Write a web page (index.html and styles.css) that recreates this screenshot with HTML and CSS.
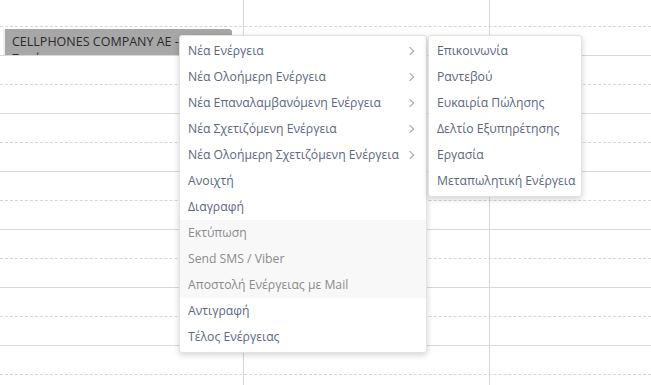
FILE: index.html
```html
<!DOCTYPE html>
<html>
<head>
  <meta charset="UTF-8">
  <title>Ημερολόγιο</title>
  <link rel="stylesheet" href="styles.css">
</head>
<body>
  <div class="calendar">
    <div class="slots">
      <div class="slot first"></div>
      <div class="slot hour"></div>
      <div class="slot"></div>
      <div class="slot hour"></div>
      <div class="slot"></div>
      <div class="slot hour"></div>
      <div class="slot"></div>
      <div class="slot hour"></div>
      <div class="slot"></div>
      <div class="slot hour"></div>
      <div class="slot"></div>
      <div class="slot hour"></div>
      <div class="slot"></div>
      <div class="slot hour"></div>
    </div>
    <div class="columns">
      <div class="col"></div>
      <div class="col"></div>
      <div class="col"></div>
    </div>

    <div class="event">CELLPHONES COMPANY AE - Συνάντηση</div>

    <ul class="menu main-menu">
      <li class="has-sub">Νέα Ενέργεια</li>
      <li class="has-sub">Νέα Ολοήμερη Ενέργεια</li>
      <li class="has-sub">Νέα Επαναλαμβανόμενη Ενέργεια</li>
      <li class="has-sub">Νέα Σχετιζόμενη Ενέργεια</li>
      <li class="has-sub">Νέα Ολοήμερη Σχετιζόμενη Ενέργεια</li>
      <li>Ανοιχτή</li>
      <li>Διαγραφή</li>
      <li class="disabled">Εκτύπωση</li>
      <li class="disabled">Send SMS / Viber</li>
      <li class="disabled">Αποστολή Ενέργειας με Mail</li>
      <li>Αντιγραφή</li>
      <li>Τέλος Ενέργειας</li>
    </ul>

    <ul class="menu sub-menu">
      <li>Επικοινωνία</li>
      <li>Ραντεβού</li>
      <li>Ευκαιρία Πώλησης</li>
      <li>Δελτίο Εξυπηρέτησης</li>
      <li>Εργασία</li>
      <li>Μεταπωλητική Ενέργεια</li>
    </ul>
  </div>
</body>
</html>
```

FILE: styles.css
```css
html, body {
  margin: 0;
  padding: 0;
  background: #ffffff;
  font-family: "Open Sans", "Noto Sans", sans-serif;
  font-size: 12px;
  overflow: hidden;
}

.calendar {
  position: relative;
  width: 651px;
  height: 385px;
  overflow: hidden;
}

/* time slots */
.slots {
  display: flex;
  flex-direction: column;
}
.slot {
  height: 28px;
  flex: none;
  border-bottom: 1px dashed #d6d6d6;
}
.slot.first {
  height: 26px;
}
.slot.hour {
  border-bottom: 1px solid #d8d8d8;
}

/* day columns */
.columns {
  position: absolute;
  top: 0;
  left: 0;
  right: 0;
  bottom: 0;
  display: flex;
}
.col {
  width: 246px;
  flex: none;
  border-right: 1px solid #d8d8d8;
  box-sizing: border-box;
}
.col:first-child {
  width: 244px;
}

/* event */
.event {
  position: absolute;
  left: 3px;
  top: 29px;
  width: 229px;
  height: 26px;
  box-sizing: border-box;
  padding: 4px 0 0 7px;
  background: #a7a7a7;
  border-left: 2px solid #f1f1f1;
  border-top-right-radius: 3px;
  color: #2b2b2b;
  font-size: 12.5px;
  line-height: 17px;
  overflow: hidden;
}

/* context menu */
.menu {
  position: absolute;
  margin: 0;
  padding: 2px 0;
  list-style: none;
  background: #ffffff;
  border: 1px solid #e2e2e2;
  border-radius: 3px;
  box-shadow: 0 2px 6px rgba(0, 0, 0, 0.18);
}
.menu li {
  height: 26px;
  line-height: 26px;
  padding: 0 9px 0 8px;
  color: #5b6783;
  font-size: 12.2px;
  white-space: nowrap;
}
.menu li.has-sub {
  position: relative;
  padding-right: 30px;
}
.menu li.has-sub:after {
  content: "";
  position: absolute;
  right: 13px;
  top: 10px;
  width: 5px;
  height: 5px;
  border-top: 1.5px solid #9aa3b3;
  border-right: 1.5px solid #9aa3b3;
  transform: rotate(45deg);
}
.menu li.disabled {
  color: #8b8b8b;
  background: #f8f8f8;
}

.main-menu {
  left: 179px;
  top: 35px;
  width: 248px;
  box-sizing: border-box;
}
.sub-menu {
  left: 428px;
  top: 35px;
  width: 154px;
  box-sizing: border-box;
}
```
